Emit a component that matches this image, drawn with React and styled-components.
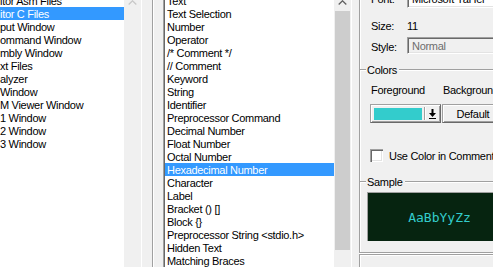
import React from 'react';
import styled, { createGlobalStyle } from 'styled-components';

const Global = createGlobalStyle`
  html, body { margin: 0; padding: 0; background: #f0f0f0; overflow: hidden; }
  body {
    font-family: "Liberation Sans", Arial, sans-serif;
    font-size: 11px;
    letter-spacing: -0.3px;
    color: #000;
  }
`;

const Screen = styled.div`
  width: 493px;
  height: 267px;
  overflow: hidden;
  display: flex;
  align-items: stretch;
  background: #f0f0f0;
`;

const ListBox = styled.div`
  flex: none;
  display: flex;
  height: 100%;
  background: #fff;
  border-right: 1px solid #fff;
  ${(p) => p.$framed && `
    border-left: 1px solid #a0a0a0;
    box-shadow: inset 1px 0 #696969;
    padding-left: 1px;
  `}
`;

const ListBody = styled.div`
  width: ${(p) => p.$width}px;
  overflow: hidden;
  background: #fff;
`;

const Rows = styled.div`
  margin-top: -6px;
  display: flex;
  flex-direction: column;
`;

const Row = styled.div`
  height: 13px;
  line-height: 14px;
  padding-left: ${(p) => p.$indent}px;
  white-space: nowrap;
  background: ${(p) => (p.$selected ? '#3399ff' : 'transparent')};
  color: ${(p) => (p.$selected ? '#fff' : '#000')};
`;

const ScrollBar = styled.div`
  width: 17px;
  flex: none;
  background: #f0f0f0;
  display: flex;
  flex-direction: column;
  align-items: stretch;
`;

const ArrowButton = styled.div`
  height: 17px;
  margin-top: -6px;
  display: flex;
  align-items: center;
  justify-content: center;
`;

const Thumb = styled.div`
  height: 239px;
  margin: 0 1px;
  background: #cdcdcd;
`;

const Divider = styled.div`
  flex: none;
  width: 1px;
  margin: 0 10px;
  background: #a0a0a0;
  box-shadow: 1px 0 #fff;
`;

const RightPanel = styled.div`
  flex: 1;
  min-width: 0;
  padding-left: 7px;
  display: flex;
  flex-direction: column;
`;

const GroupStack = styled.div`
  border-left: 1px solid #a0a0a0;
  border-bottom: 1px solid #a0a0a0;
  box-shadow: inset 1px 0 #fff, 0 1px #fff;
  padding: 0 0 11px 11px;
  display: flex;
  flex-direction: column;
`;

const NextGroup = styled.div`
  flex: 1;
  margin-top: 1px;
  border-left: 1px solid #a0a0a0;
  border-top: 1px solid #a0a0a0;
  box-shadow: inset 1px 1px #fff;
`;

const FormRow = styled.div`
  display: grid;
  grid-template-columns: 36px 1fr;
  align-items: center;
  height: ${(p) => p.$h}px;
  margin-top: ${(p) => p.$mt}px;
  white-space: nowrap;
`;

const Label = styled.span`
  line-height: 14px;
  padding-top: ${(p) => p.$pt || 0}px;
`;

const Combo = styled.div`
  box-sizing: border-box;
  height: ${(p) => p.$h}px;
  width: 110px;
  padding: 1px 0 0 4px;
  display: flex;
  align-items: center;
  white-space: nowrap;
  overflow: hidden;
  background: ${(p) => (p.$disabled ? '#f0f0f0' : '#fff')};
  color: ${(p) => (p.$disabled ? '#6d6d6d' : '#000')};
  border-top: 1px solid #a0a0a0;
  border-left: 1px solid #a0a0a0;
  border-bottom: 1px solid #fff;
  border-right: 1px solid #fff;
  box-shadow: inset 1px 1px #696969, inset -1px -1px #e3e3e3;
`;

const GroupHeader = styled.div`
  display: flex;
  align-items: center;
  height: 13px;
  margin-left: -11px;
  margin-top: ${(p) => p.$mt}px;
  line-height: 14px;
  &::before, &::after {
    content: '';
    height: 0;
    border-top: 1px solid #a0a0a0;
    border-bottom: 1px solid #fff;
  }
  &::before { width: 6px; flex: none; }
  &::after { flex: 1; }
  & > span { padding: 1px 2px 0 1px; }
`;

const LabelPair = styled.div`
  display: grid;
  grid-template-columns: 72px auto;
  height: 13px;
  line-height: 15px;
  margin-top: 7px;
  white-space: nowrap;
`;

const ButtonRow = styled.div`
  display: flex;
  gap: 1px;
  margin-top: 8px;
  margin-left: -1px;
  height: 19px;
`;

const raised = `
  box-sizing: border-box;
  background: #f0f0f0;
  border: 1px solid #a0a0a0;
  border-right-color: #696969;
  border-bottom-color: #696969;
  box-shadow: inset 1px 1px #fff, inset -1px -1px #a0a0a0;
`;

const ColorPicker = styled.div`
  ${raised}
  width: 71px;
  height: 19px;
  flex: none;
  display: flex;
  align-items: center;
  padding-left: 3px;
`;

const Swatch = styled.div`
  width: 48px;
  height: 12px;
  background: ${(p) => p.$color};
  flex: none;
`;

const DropPart = styled.div`
  flex: 1;
  align-self: stretch;
  margin: 2px 1px 2px 2px;
  border-left: 1px solid #a0a0a0;
  box-shadow: inset 1px 0 #fff;
  display: flex;
  align-items: center;
  justify-content: center;
`;

const PushButton = styled.div`
  ${raised}
  width: 62px;
  height: 19px;
  flex: none;
  display: flex;
  align-items: center;
  justify-content: center;
  padding-top: 1px;
  color: #000;
`;

const CheckRow = styled.label`
  display: flex;
  align-items: center;
  gap: 6px;
  height: 13px;
  margin-top: 26px;
  margin-left: -1px;
  line-height: 14px;
  white-space: nowrap;
`;

const CheckBox = styled.span`
  width: 13px;
  height: 13px;
  flex: none;
  box-sizing: border-box;
  background: #fff;
  box-shadow: inset 1px 1px #a0a0a0, inset 2px 2px #696969, inset -1px -1px #fff, inset -2px -2px #e3e3e3;
`;

const SampleBox = styled.div`
  margin-top: 4px;
  margin-left: -4px;
  width: 144px;
  height: 49px;
  box-sizing: border-box;
  background: #062410;
  border-top: 1px solid #a0a0a0;
  border-left: 1px solid #a0a0a0;
  display: flex;
  align-items: center;
  justify-content: center;
  font-family: "DejaVu Sans Mono", "Liberation Mono", monospace;
  font-size: 13px;
  letter-spacing: 0;
  color: #33cccc;
`;

const Chevron = ({ color }) => (
  <svg width="9" height="5" viewBox="0 0 9 5">
    <polyline points="0.7,4.5 4.5,0.8 8.3,4.5" fill="none" stroke={color} strokeWidth="1.3" />
  </svg>
);

const DownArrow = () => (
  <svg width="7" height="10" viewBox="0 0 7 10">
    <path d="M2.5 0h2v4h2.5l-3.5 4l-3.5-4h2.5z" fill="#000" />
    <rect x="0" y="9" width="7" height="1" fill="#000" />
  </svg>
);

const windowItems = [
  'itor Asm Files',
  'itor C Files',
  'put Window',
  'ommand Window',
  'mbly Window',
  'xt Files',
  'alyzer',
  'Window',
  'M Viewer Window',
  '1 Window',
  '2 Window',
  '3 Window',
];

const elementItems = [
  'Text',
  'Text Selection',
  'Number',
  'Operator',
  '/* Comment */',
  '// Comment',
  'Keyword',
  'String',
  'Identifier',
  'Preprocessor Command',
  'Decimal Number',
  'Float Number',
  'Octal Number',
  'Hexadecimal Number',
  'Character',
  'Label',
  'Bracket () []',
  'Block {}',
  'Preprocessor String <stdio.h>',
  'Hidden Text',
  'Matching Braces',
];

export default function App() {
  return (
    <>
      <Global />
      <Screen>
        <ListBox>
          <ListBody $width={124}>
            <Rows>
              {windowItems.map((t, i) => (
                <Row key={t} $indent={0} $selected={i === 1}>{t}</Row>
              ))}
            </Rows>
          </ListBody>
          <ScrollBar>
            <ArrowButton><Chevron color="#c8c8c8" /></ArrowButton>
          </ScrollBar>
        </ListBox>

        <Divider />

        <ListBox $framed>
          <ListBody $width={169}>
            <Rows>
              {elementItems.map((t, i) => (
                <Row key={t} $indent={2} $selected={i === 13}>{t}</Row>
              ))}
            </Rows>
          </ListBody>
          <ScrollBar>
            <ArrowButton><Chevron color="#606060" /></ArrowButton>
            <Thumb />
          </ScrollBar>
        </ListBox>

        <RightPanel>
          <GroupStack>
            <FormRow $h={19} $mt={-11}>
              <Label>Font:</Label>
              <Combo $h={19}>Microsoft YaHei</Combo>
            </FormRow>
            <FormRow $h={13} $mt={11}>
              <Label>Size:</Label>
              <Label>11</Label>
            </FormRow>
            <FormRow $h={17} $mt={5}>
              <Label $pt={2}>Style:</Label>
              <Combo $h={17} $disabled>Normal</Combo>
            </FormRow>

            <GroupHeader $mt={9}><span>Colors</span></GroupHeader>
            <LabelPair>
              <span>Foreground</span>
              <span>Background</span>
            </LabelPair>
            <ButtonRow>
              <ColorPicker>
                <Swatch $color="#33cccc" />
                <DropPart><DownArrow /></DropPart>
              </ColorPicker>
              <PushButton>Default</PushButton>
            </ButtonRow>
            <CheckRow>
              <CheckBox />
              <span>Use Color in Comments</span>
            </CheckRow>

            <GroupHeader $mt={13}><span>Sample</span></GroupHeader>
            <SampleBox>AaBbYyZz</SampleBox>
          </GroupStack>
          <NextGroup />
        </RightPanel>
      </Screen>
    </>
  );
}
